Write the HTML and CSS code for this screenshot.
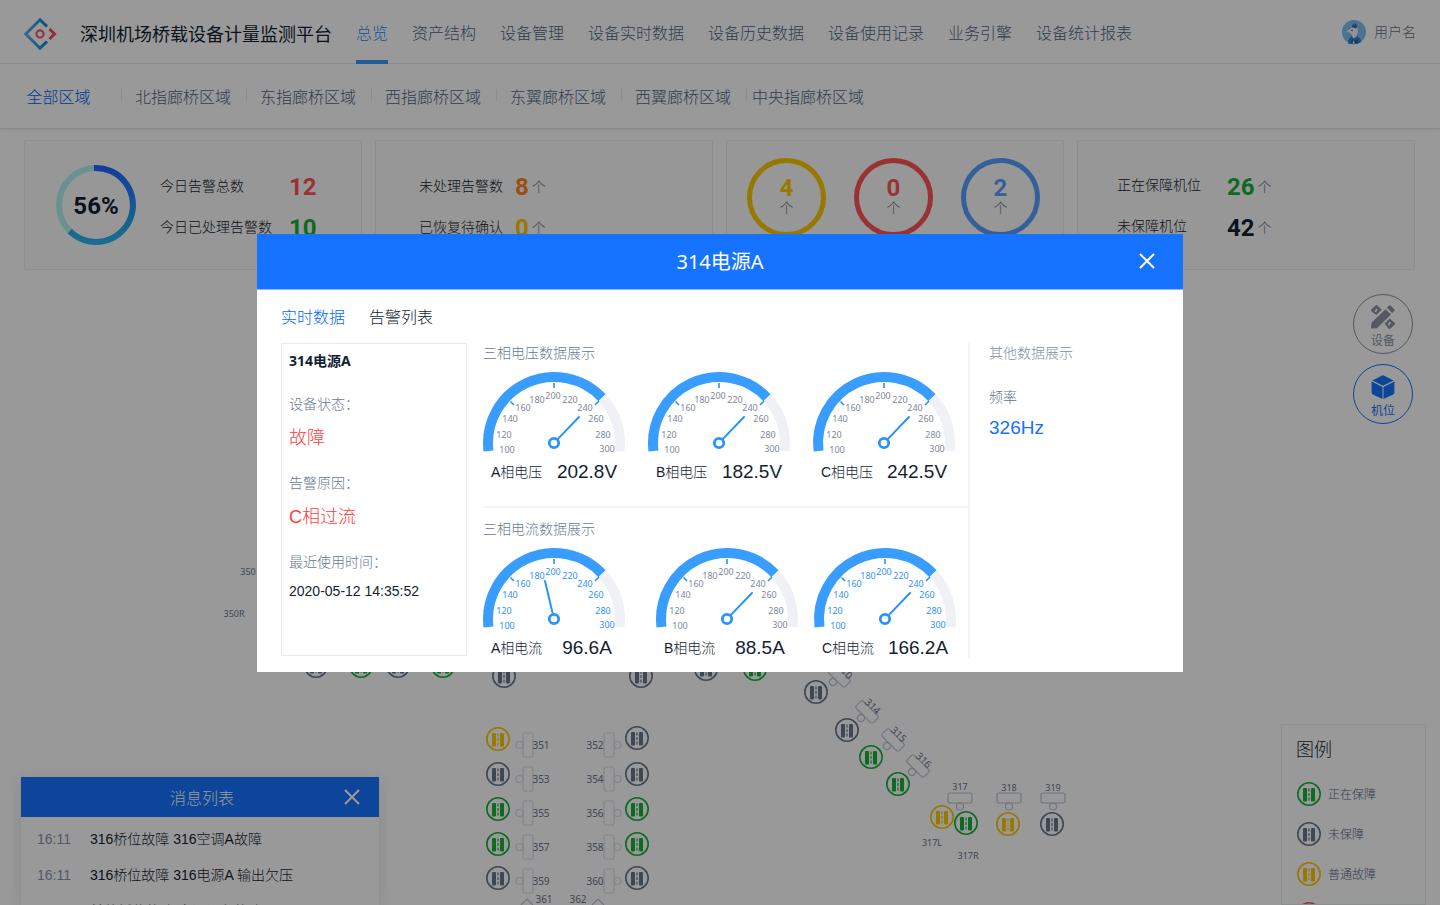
FILE: index.html
```html
<!DOCTYPE html>
<html lang="zh-CN">
<head>
<meta charset="utf-8">
<meta name="viewport" content="width=device-width, initial-scale=1">
<title>深圳机场桥载设备计量监测平台</title>
<link rel="stylesheet" href="styles.css">
</head>
<body>
<div class="page">
  <header class="topbar">
    <svg class="logo" viewBox="0 0 32 32" aria-hidden="true">
      <defs><linearGradient id="logoBlue" x1="0" x2="1"><stop offset="0" stop-color="#5fb0ea"/><stop offset="1" stop-color="#0f86dc"/></linearGradient></defs>
      <path d="M23 8.500 16 1.800 1.800 16 16 30.200 23 23.500" fill="none" stroke="url(#logoBlue)" stroke-width="3"/>
      <circle cx="16" cy="16" r="3.600" fill="none" stroke="#f0606c" stroke-width="2.200"/>
      <path d="m25.500 11 5 5-5 5" fill="none" stroke="#f0505c" stroke-width="3"/>
    </svg>
    <h1 class="brand">深圳机场桥载设备计量监测平台</h1>
    <nav class="nav">
      <a class="nav-link active" href="#">总览</a>
      <a class="nav-link" href="#">资产结构</a>
      <a class="nav-link" href="#">设备管理</a>
      <a class="nav-link" href="#">设备实时数据</a>
      <a class="nav-link" href="#">设备历史数据</a>
      <a class="nav-link" href="#">设备使用记录</a>
      <a class="nav-link" href="#">业务引擎</a>
      <a class="nav-link" href="#">设备统计报表</a>
    </nav>
    <div class="user">
      <svg class="avatar" viewBox="0 0 24 24" aria-hidden="true">
        <circle cx="12" cy="12" r="12" fill="#7fc2ee"/>
        <path d="M6 23.500c0-4 1-6 3-6.500l1-3 5 0 1 3c2.500.500 3 3 3 5-3 2.400-9 3-13 1.500z" fill="#2f86cf"/>
        <path d="m4.500 11.500 5-3.500 3-1 3 1.500.500 4-1.500 4-3 2-2-3.500-1-2z" fill="#eef4ff"/>
        <path d="m10 7 1-4 1 3 1.500-4 .500 3.500 1.500-1-1.500 4z" fill="#2d62b8"/>
        <path d="m9 23 2-4 2 3 2-4 1 5z" fill="#2b55b4"/><path d="m11.500 20.500 1.500 3h-2.500z" fill="#fff"/>
        <circle cx="10" cy="10.500" r=".8" fill="#2b4d8c"/>
      </svg>
      <span>用户名</span>
    </div>
  </header>

  <nav class="areas">
    <a class="area active" href="#">全部区域</a>
    <a class="area" href="#">北指廊桥区域</a>
    <a class="area" href="#">东指廊桥区域</a>
    <a class="area" href="#">西指廊桥区域</a>
    <a class="area" href="#">东翼廊桥区域</a>
    <a class="area" href="#">西翼廊桥区域</a>
    <a class="area" href="#">中央指廊桥区域</a>
  </nav>

  <main class="main">
    <section class="cards">
      <div class="card card-progress">
        <div class="progress">
          <svg viewBox="0 0 80 80" aria-hidden="true">
            <defs><linearGradient id="ringBlue" x1="0" y1="0" x2="0" y2="1"><stop offset="0" stop-color="#2465ff"/><stop offset="1" stop-color="#28b8f0"/></linearGradient></defs>
            <circle cx="40" cy="40" r="37" fill="none" stroke="#aef2f0" stroke-width="6"/>
            <path d="M38 3.050A37 37 0 1 1 13.800 66.200" fill="none" stroke="url(#ringBlue)" stroke-width="6"/>
          </svg>
          <strong class="num">56%</strong>
        </div>
        <dl class="stats">
          <dt>今日告警总数</dt><dd><span class="num red">12</span></dd>
          <dt>今日已处理告警数</dt><dd><span class="num green">10</span></dd>
        </dl>
      </div>
      <div class="card card-alarms">
        <dl class="stats">
          <dt>未处理告警数</dt><dd><span class="num orange">8</span><span class="unit">个</span></dd>
          <dt>已恢复待确认</dt><dd><span class="num yellow">0</span><span class="unit">个</span></dd>
        </dl>
      </div>
      <div class="card card-rings">
        <div class="ring yellow"><span class="num">4</span><span class="unit">个</span></div>
        <div class="ring red"><span class="num">0</span><span class="unit">个</span></div>
        <div class="ring blue"><span class="num">2</span><span class="unit">个</span></div>
      </div>
      <div class="card card-stands">
        <dl class="stats">
          <dt>正在保障机位</dt><dd><span class="num green">26</span><span class="unit">个</span></dd>
          <dt>未保障机位</dt><dd><span class="num">42</span><span class="unit">个</span></dd>
        </dl>
      </div>
    </section>

    <section class="map">
      <svg class="map-canvas" id="map" viewBox="0 270 1440 635" preserveAspectRatio="xMidYMin slice" aria-label="机位图">
        <defs>
          <symbol id="stand" viewBox="-13 -13 26 26">
            <circle r="11.200" fill="none" stroke="currentColor" stroke-width="1.600"/>
            <rect x="-6" y="-6" width="4" height="13.500" rx="1" fill="currentColor"/>
            <rect x="2" y="-6" width="4" height="13.500" rx="1" fill="currentColor"/>
            <path d="M0-5.500V7.500" stroke="currentColor" stroke-width="2" stroke-dasharray="3 1.500" opacity=".6"/>
          </symbol>
        </defs>
      </svg>

      <div class="modes">
        <button class="mode" type="button">
          <svg viewBox="0 0 24 24" aria-hidden="true">
            <path d="M0 23.500.500 17.800 14.500 4.200 20 9.600 6 23.300z" fill="currentColor"/>
            <path d="m16 2.800 2.200-2.200a1 1 0 0 1 1.400 0l3.800 3.800a1 1 0 0 1 0 1.400L21.200 8z" fill="currentColor"/>
            <path d="M0 4.800 4.800.300a1 1 0 0 1 1.400 0l4.600 4.500L5.200 10 .300 6.200z" fill="currentColor"/>
            <path d="m13.500 18.800 5.200-5.300 5.100 4.600a1 1 0 0 1 0 1.400l-4.600 4.300a1 1 0 0 1-1.400 0z" fill="currentColor"/>
            <path d="m3.600 6.800 1.600-3.200 1.600.600-1.600 2.800zM16.800 20l1.400-3.200 2 .400-1.800 3.200z" class="icon-cut"/>
          </svg>
          <span>设备</span>
        </button>
        <button class="mode active" type="button">
          <svg viewBox="0 0 24 24" aria-hidden="true">
            <path d="M11.200.400a1.600 1.600 0 0 1 1.600 0L22.600 5.500 12 10.800 1.400 5.500z" fill="currentColor"/>
            <path d="M.600 6.500 11.500 11.900V24L1.800 19.400A2 2 0 0 1 .600 17.600z" fill="currentColor"/>
            <path d="M23.400 6.500 12.500 11.900V24l9.700-4.600a2 2 0 0 0 1.200-1.800z" fill="currentColor"/>
          </svg>
          <span>机位</span>
        </button>
      </div>

      <aside class="messages">
        <header class="messages-head">
          <h2>消息列表</h2>
          <button class="close" type="button" aria-label="关闭"><svg viewBox="0 0 16 16"><path d="m1 1 14 14M15 1 1 15"/></svg></button>
        </header>
        <ul>
          <li><time>16:11</time><span>316桥位故障 316空调A故障</span></li>
          <li><time>16:11</time><span>316桥位故障 316电源A 输出欠压</span></li>
          <li><time>16:11</time><span>其他桥位故障 空调设备故障</span></li>
        </ul>
      </aside>

      <aside class="legend">
        <h2>图例</h2>
        <ul>
          <li><svg class="green"><use href="#stand"/></svg><span>正在保障</span></li>
          <li><svg class="gray"><use href="#stand"/></svg><span>未保障</span></li>
          <li><svg class="yellow"><use href="#stand"/></svg><span>普通故障</span></li>
          <li><svg class="red"><use href="#stand"/></svg><span>严重故障</span></li>
        </ul>
      </aside>
    </section>
  </main>
</div>

<div class="overlay">
  <div class="dialog" role="dialog" aria-labelledby="dialogTitle">
    <header class="dialog-head">
      <h2 id="dialogTitle">314电源A</h2>
      <button class="close" type="button" aria-label="关闭"><svg viewBox="0 0 16 16"><path d="m1 1 14 14M15 1 1 15"/></svg></button>
    </header>
    <div class="dialog-body">
      <div class="tabs" role="tablist">
        <button class="tab active" type="button" role="tab" aria-selected="true">实时数据</button>
        <button class="tab" type="button" role="tab" aria-selected="false">告警列表</button>
      </div>
      <div class="detail">
        <section class="device">
          <h3>314电源A</h3>
          <dl>
            <dt>设备状态：</dt><dd class="fault">故障</dd>
            <dt>告警原因：</dt><dd class="fault">C相过流</dd>
            <dt>最近使用时间：</dt><dd class="date">2020-05-12 14:35:52</dd>
          </dl>
        </section>
        <div class="phases">
          <section class="phase">
            <h3>三相电压数据展示</h3>
            <div class="gauges" id="voltage"></div>
          </section>
          <section class="phase">
            <h3>三相电流数据展示</h3>
            <div class="gauges current" id="current"></div>
          </section>
        </div>
        <section class="other">
          <h3>其他数据展示</h3>
          <dl><dt>频率</dt><dd>326Hz</dd></dl>
        </section>
      </div>
    </div>
  </div>
</div>
<script src="app.js"></script>
</body>
</html>
```
FILE: styles.css
```css
* { box-sizing: border-box; }
html, body { height: 100%; }
body {
  margin: 0;
  overflow: hidden;
  background: #fff;
  color: #141e30;
  font-family: "Noto Sans", "Noto Sans CJK SC", sans-serif;
  font-size: 14px;
  font-weight: 300;
  line-height: 20px;
}
h1, h2, h3, dl, dd, ul { margin: 0; padding: 0; font-weight: inherit; }
h1, h2, h3 { font-size: 14px; }
ul { list-style: none; }
a { color: inherit; text-decoration: none; }
button { margin: 0; padding: 0; border: 0; background: none; color: inherit; font: inherit; cursor: pointer; }
svg { display: block; overflow: visible; }

.red { color: #ff5456; }
.green { color: #18b03a; }
.orange { color: #ff8420; }
.yellow { color: #fcc800; }
.blue { color: #5a9fff; }
.gray { color: #67788c; }

.page { display: flex; flex-direction: column; height: 100%; }

.topbar {
  display: flex;
  align-items: center;
  flex: none;
  height: 64px;
  padding: 0 24px;
  border-bottom: 1px solid #ebecf2;
}
.logo { flex: none; width: 32px; height: 32px; margin-right: 24px; margin-top: 4px; }
.brand { margin-right: 24px; padding-top: 4px; font-size: 18px; font-weight: 400; line-height: 24px; white-space: nowrap; }
.nav { display: flex; align-self: stretch; gap: 24px; }
.nav-link {
  height: 64px;
  border-bottom: 4px solid transparent;
  color: #56657e;
  font-size: 16px;
  line-height: 66px;
  white-space: nowrap;
}
.nav-link.active { border-color: #3a9bff; color: #2389fa; }
.user { display: flex; align-items: center; gap: 8px; margin-left: auto; color: #6a7180; }
.avatar { width: 24px; height: 24px; }

.areas {
  display: flex;
  align-items: center;
  flex: none;
  height: 65px;
  border-bottom: 1px solid #e8e9f0;
  box-shadow: 0 1px 4px rgba(0, 0, 0, .08);
  color: #56657e;
  font-size: 16px;
  line-height: 24px;
}
.area { position: relative; width: 125px; padding: 2px 1px 0 0; text-align: center; white-space: nowrap; }
.area:first-child { width: 121px; padding-right: 4px; }
.area + .area::before {
  content: "";
  position: absolute;
  left: 0;
  top: 6px;
  height: 12px;
  border-left: 1px solid #e8eaf2;
}
.area.active { color: #0060f5; }

.main { display: flex; flex: 1; flex-direction: column; min-height: 0; padding-top: 11px; }
.cards { display: grid; grid-template-columns: repeat(4, 1fr); gap: 13px; flex: none; padding: 0 25px 0 24px; }
.card { display: flex; height: 130px; border: 1px solid #ebedf5; border-radius: 2px; background: #fcfcfc; }
.num { font-family: Roboto, sans-serif; font-size: 24px; font-weight: 700; line-height: 28px; }
.unit { color: #6b788e; }
.stats { display: grid; row-gap: 13px; align-content: start; padding-top: 32px; white-space: nowrap; }
.stats dt { line-height: 26px; }
.stats dd { display: flex; align-items: center; gap: 3px; height: 28px; }
.card-progress { padding: 0 31px; gap: 24px; }
.card-progress .stats { grid-template-columns: 129px 1fr; }
.progress { display: grid; place-items: center; width: 80px; height: 80px; margin-top: 24px; }
.progress > * { grid-area: 1 / 1; }
.progress svg { width: 80px; height: 80px; }
.progress .num { padding-top: 2px; }
.card-alarms { padding: 0 43px; }
.card-alarms .stats { grid-template-columns: 96px 1fr; }
.card-rings { gap: 28px; padding: 17px 20px 0; }
.ring {
  display: flex;
  flex-direction: column;
  align-items: center;
  width: 79px;
  height: 79px;
  padding-top: 15px;
  border: 5px solid currentColor;
  border-radius: 50%;
}
.ring .num, .ring .unit { line-height: 20px; }
.card-stands { padding: 0 39px; }
.card-stands .stats { grid-template-columns: 110px 1fr; }
.card-stands .stats dt { line-height: 24px; }

.map { position: relative; flex: 1; min-height: 0; }
.map-canvas { width: 100%; height: 100%; overflow: hidden; }
.map-canvas text { fill: #67758c; font-weight: 400; }
.bridge { fill: none; stroke: #d9dee8; stroke-width: 1.2; }
.bridge.strong { stroke: #bcc4d2; }

.modes { position: absolute; top: 24px; right: 27px; display: grid; gap: 10px; }
.mode {
  display: flex;
  flex-direction: column;
  align-items: center;
  width: 60px;
  height: 60px;
  padding-top: 10px;
  border: 1px solid currentColor;
  border-radius: 50%;
  color: #8a93a4;
  font-size: 12px;
  line-height: 18px;
}
.mode svg { width: 24px; height: 24px; margin-bottom: 3px; }
.mode span { font-weight: 400; }
.mode.active { color: #1573ff; }
.icon-cut { fill: #fff; }

.close svg { width: 16px; height: 16px; fill: none; stroke: #fff; stroke-width: 2; }

.messages {
  position: absolute;
  left: 21px;
  bottom: 0;
  width: 358px;
  height: 128px;
  overflow: hidden;
  background: #fff;
  box-shadow: 0 2px 12px rgba(0, 0, 0, .12);
}
.messages-head { display: flex; align-items: center; height: 40px; padding: 0 19px; background: #1573ff; color: #fff; }
.messages-head h2 { flex: 1; padding: 2px 0 0 20px; text-align: center; font-size: 16px; line-height: 24px; }
.messages ul { padding: 4px 16px; }
.messages li { display: flex; height: 36px; line-height: 36px; font-family: "Liberation Sans", "Noto Sans CJK SC", sans-serif; white-space: nowrap; }
.messages time { width: 53px; color: #8794a8; }

.legend {
  position: absolute;
  right: 14px;
  bottom: 0;
  width: 145px;
  height: 181px;
  overflow: hidden;
  padding: 12px 14px 0;
  border: 1px solid #ebedf2;
  background: #fff;
  color: #56657e;
  font-size: 12px;
}
.legend h2 { margin-bottom: 13px; color: #141e30; font-size: 18px; line-height: 24px; }
.legend li { display: flex; align-items: center; gap: 6px; height: 40px; }
.legend span { padding-top: 2px; }
.legend svg { width: 26px; height: 26px; }

.overlay {
  position: fixed;
  inset: 0;
  display: flex;
  align-items: center;
  justify-content: center;
  padding-top: 1px;
  background: rgba(0, 0, 0, .4);
}
.dialog { width: 926px; max-width: 100%; background: #fff; }
.dialog-head { display: flex; align-items: center; height: 56px; padding: 0 28px 2px; background: #1573ff; color: #fff; border-bottom: 1px solid #8ab8ff; }
.dialog-head h2 { flex: 1; padding: 3px 0 0 16px; text-align: center; font-size: 20px; font-weight: 400; line-height: 28px; }
.dialog-body { padding: 15px 24px 14px; }
.tabs { display: flex; gap: 24px; margin-bottom: 14px; font-size: 16px; line-height: 24px; }
.tab.active { color: #0068ff; }
.detail { display: grid; grid-template-columns: 186px 487px 1fr; column-gap: 16px; }

.device { margin-bottom: 2px; padding: 7px; border: 1px solid #e8eaf4; }
.device h3 { margin-bottom: 23px; font-weight: 700; }
.device dl, .readout { font-family: "Liberation Sans", "Noto Sans CJK SC", sans-serif; }
.device dt { color: #6b7990; }
.device .fault { margin-bottom: 22px; padding-top: 11px; color: #ff3c3e; font-size: 18px; line-height: 26px; }
.device .date { padding-top: 9px; }

.phases { border-right: 2px solid #f2f3fa; }
.phase + .phase { margin-top: 24px; padding-top: 11px; border-top: 2px solid #f2f3fa; }
.phase h3 { margin-bottom: 9px; color: #6b7990; }
.gauges { display: grid; grid-template-columns: 165px 165px 142px; }
.gauges.current { grid-template-columns: 173px 158px 142px; }
.gauge { width: 142px; }
.gauge svg { width: 142px; height: 84px; margin-bottom: 6px; }
.gauge text { fill: #7d889a; font-size: 9px; font-weight: 400; text-anchor: middle; }
.gauge.bright text { fill: #2f93f5; }
.readout { display: grid; grid-template-columns: 61px 70px; height: 20px; padding-left: 8px; white-space: nowrap; }
.readout b { font-size: 19px; font-weight: 400; text-align: center; }

.other { padding-left: 3px; color: #66738a; }
.other h3 { margin-bottom: 24px; color: #848da0; }
.other dt { margin-bottom: 10px; }
.other dd { color: #1573ff; font: 19px/22px "Liberation Sans", sans-serif; }
```
FILE: app.js
```js
const NS = 'http://www.w3.org/2000/svg';

// Dial scale: label, x and y relative to the hub.
const SCALE = [
  [100, -47, 7], [120, -50, -8], [140, -44, -24], [160, -31, -35],
  [180, -17, -43], [200, -1, -47], [220, 16, -43], [240, 31, -35],
  [260, 42, -24], [280, 49, -8], [300, 53, 6]
];

function gauge(name, value, options) {
  const o = Object.assign({ tip: [25, -26], bright: false }, options);
  const labels = SCALE.map(([n, x, y]) => `<text x="${x}" y="${y + 3}">${n}</text>`).join('');
  const len = Math.hypot(o.tip[0], o.tip[1]);
  const ux = o.tip[0] / len, uy = o.tip[1] / len;
  return `<div class="gauge${o.bright ? ' bright' : ''}">
    <svg viewBox="-71 -71 142 84" aria-hidden="true">
      <path d="M-65.500 8A66 66 0 0 1 48-45.300" fill="none" stroke="#389dff" stroke-width="10"/>
      <path d="M48-45.300A66 66 0 0 1 65.500 8" fill="none" stroke="#f0f1f6" stroke-width="10"/>
      <path d="M0-60v5M-43.500-41.500l3.500 3.500M45-42l-4 4" stroke="#2893ff" stroke-width="1.600"/>
      ${labels}
      <path d="M${ux * 5} ${uy * 5}L${o.tip[0]} ${o.tip[1]}" stroke="#2893ff" stroke-width="2" stroke-linecap="round"/>
      <circle r="4.700" fill="#fff" stroke="#2893ff" stroke-width="2.800"/>
    </svg>
    <div class="readout"><span>${name}</span><b>${value}</b></div>
  </div>`;
}

document.getElementById('voltage').innerHTML =
  gauge('A相电压', '202.8V') + gauge('B相电压', '182.5V') + gauge('C相电压', '242.5V');
document.getElementById('current').innerHTML =
  gauge('A相电流', '96.6A', { tip: [-9, -38], bright: true }) +
  gauge('B相电流', '88.5A') +
  gauge('C相电流', '166.2A', { bright: true });

// Stand markers: x, y, state.
const STANDS = [
  [316, 666, 'gray'], [361, 666, 'green'], [398, 666, 'gray'], [443, 666, 'green'],
  [504, 676, 'gray'], [641, 676, 'gray'], [706, 669, 'gray'], [755, 669, 'green'],
  [498, 739, 'yellow'], [498, 774, 'gray'], [498, 809, 'green'], [498, 844, 'green'], [498, 878, 'gray'],
  [637, 738, 'gray'], [637, 774, 'gray'], [637, 809, 'green'], [637, 844, 'green'], [637, 878, 'gray'],
  [816, 692, 'gray'], [847, 730, 'gray'], [871, 757, 'green'], [898, 784, 'green'],
  [942, 817, 'yellow'], [966, 823, 'green'], [1008, 824, 'yellow'], [1052, 824, 'gray']
];

// Boarding bridges: x, y, rotation, strong outline.
const BRIDGES = [
  [839, 676, -45, true], [867, 712, -45, true], [893, 740, -45, true], [918, 766, -45, true],
  [960, 798, -90, true], [1009, 798, -90, true], [1053, 798, -90, true]
];

// Map texts: text, centre x, centre y, rotation, size.
const TEXTS = [
  ['350', 248, 571, 0, 9], ['350R', 234, 613, 0, 9],
  ['361', 544, 899, 0, 10], ['362', 578, 899, 0, 10],
  ['310', 845, 671, 45, 10], ['314', 873, 706, 45, 10], ['315', 899, 734, 45, 10], ['316', 924, 760, 45, 10],
  ['317', 960, 786, 0, 9], ['318', 1009, 787, 0, 9], ['319', 1053, 787, 0, 9],
  ['317L', 932, 842, 0, 9], ['317R', 968, 855, 0, 9]
];

for (let i = 0; i < 5; i++) {
  const y = 745 + 34 * i;
  BRIDGES.push([528, y, 0, false], [609, y, 180, false]);
  TEXTS.push([String(351 + 2 * i), 541, y, 0, 10], [String(352 + 2 * i), 595, y, 0, 10]);
}

let out = '';
for (const [x, y, r, strong] of BRIDGES) {
  out += `<g class="bridge${strong ? ' strong' : ''}" transform="translate(${x} ${y}) rotate(${r})">
    <rect x="-5" y="-12" width="10" height="24" rx="2"/><circle cx="-8.500" cy="0" r="3.500"/></g>`;
}
out += '<path class="bridge strong" d="m521 905 6-6 6 6M592 905l6-6 6 6"/>';
for (const [t, x, y, r, size] of TEXTS) {
  out += `<text transform="translate(${x} ${y}) rotate(${r})" y="4" text-anchor="middle" font-size="${size}">${t}</text>`;
}
for (const [x, y, state] of STANDS) {
  out += `<use class="${state}" href="#stand" x="${x - 13}" y="${y - 13}" width="26" height="26"/>`;
}
const holder = document.createElementNS(NS, 'g');
document.getElementById('map').appendChild(holder);
holder.innerHTML = out;
```
